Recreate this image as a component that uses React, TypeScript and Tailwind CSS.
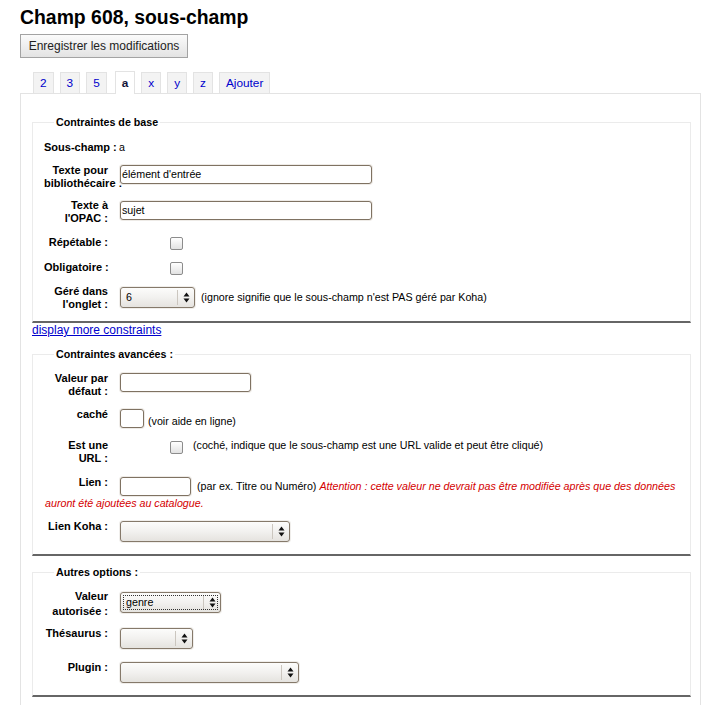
import clsx from "clsx";
import type { ReactNode } from "react";

const tabs = ["2", "3", "5", "a", "x", "y", "z", "Ajouter"];

// Small up/down arrows drawn inside the fake select boxes
function Arrows() {
  return (
    <svg width="7" height="11" viewBox="0 0 7 11">
      <path d="M3.5 0.5 L6.5 4.5 L0.5 4.5 Z" fill="#111" />
      <path d="M0.5 6.5 L6.5 6.5 L3.5 10.5 Z" fill="#111" />
    </svg>
  );
}

function Select({ className, value, focus }: { className: string; value?: string; focus?: boolean }) {
  return (
    <span
      className={clsx(
        "relative flex h-[21px] shrink-0 items-center rounded-[3px] border border-[#85796a] bg-linear-to-b from-[#fcfcfb] via-[#f2f1ef] to-[#e5e3df] shadow-[0_0_0_1px_#f0eeeb]",
        className
      )}
    >
      <span className="flex-1 pl-[5px] leading-[13px]">{value}</span>
      <span className="h-[15px] w-px bg-[#cbc6bf]" />
      <span className="flex w-[16px] justify-center">
        <Arrows />
      </span>
      {focus && <span className="pointer-events-none absolute inset-[2px] border border-dotted border-[#333]" />}
    </span>
  );
}

function TextInput({ className, value }: { className: string; value?: string }) {
  return (
    <span
      className={clsx(
        "flex h-[19px] shrink-0 items-center rounded-[3px] border border-[#7f7262] bg-white pl-[1px] leading-[13px] shadow-[0_0_0_1px_#eeebe7]",
        className
      )}
    >
      {value}
    </span>
  );
}

function Checkbox({ className }: { className?: string }) {
  return (
    <span
      className={clsx(
        "block h-[13px] w-[13px] shrink-0 rounded-[2px] border border-[#8c8c8c] bg-linear-to-b from-white to-[#e2e2e2]",
        className
      )}
    />
  );
}

function Label({ children, className }: { children: ReactNode; className?: string }) {
  return (
    <span className={clsx("w-[64px] shrink-0 text-right text-[11px] font-bold leading-[13px]", className)}>
      {children}
    </span>
  );
}

function Fieldset({ legend, children, className }: { legend: string; children: ReactNode; className?: string }) {
  return (
    <fieldset
      className={clsx(
        "ml-[11px] w-[659px] border border-[#ebebeb] border-b-2 border-b-[#666] pl-[11px]",
        className
      )}
    >
      <legend className="ml-[10px] px-[2px] font-bold leading-[13px]">{legend}</legend>
      {children}
    </fieldset>
  );
}

export default function App() {
  return (
    <div className="min-h-[705px] bg-white pl-[20px] pt-[6px] font-['Liberation_Sans',Arial,Helvetica,sans-serif] text-[10.7px] leading-[13px] text-black">
      {/* Header */}
      <h1 className="text-[19.4px] font-bold leading-[22px]">Champ 608, sous-champ</h1>
      <button className="mt-[6px] h-[24px] w-[168px] border border-[#a3a3a3] bg-linear-to-b from-[#fbfbfb] to-[#e3e3e3] text-[12px] text-[#222]">
        Enregistrer les modifications
      </button>

      {/* Tabs */}
      <div className="mt-[13px] flex items-end gap-[6px] pl-[13px] text-[11.8px]">
        {tabs.map((t) =>
          t === "a" ? (
            <span
              key={t}
              className="relative z-10 -mb-px ml-[2px] h-[23px] border border-b-0 border-[#e3e3e3] bg-white px-[6px] font-bold leading-[22px] text-[#14143a]"
            >
              {t}
            </span>
          ) : (
            <span
              key={t}
              className="h-[21px] border border-b-0 border-[#e3e3e3] bg-[#f3f3f3] px-[6px] leading-[21px] text-[#0000cc]"
            >
              {t}
            </span>
          )
        )}
      </div>

      {/* Panel */}
      <div className="w-[681px] border border-b-0 border-[#e3e3e3] pb-[20px] pt-[22px]">
        <Fieldset legend="Contraintes de base" className="pb-[10px] pt-[12px]">
          <div className="flex items-start gap-[12px]">
            <Label className="whitespace-nowrap">Sous-champ&nbsp;:</Label>
            <span className="-ml-[1px]">a</span>
          </div>
          <div className="mt-[10px] flex items-start gap-[12px]">
            <Label className="whitespace-nowrap">
              Texte pour
              <br />
              <span className="float-left">bibliothécaire&nbsp;:</span>
            </Label>
            <TextInput className="relative mt-[1px] w-[252px]" value="élément d'entrée" />
          </div>
          <div className="mt-[9px] flex items-start gap-[12px]">
            <Label>
              Texte à
              <br />
              l'OPAC&nbsp;:
            </Label>
            <TextInput className="mt-[2px] w-[252px]" value="sujet" />
          </div>
          <div className="mt-[11px] flex items-start gap-[12px]">
            <Label>Répétable&nbsp;:</Label>
            <Checkbox className="ml-[50px] mt-[1px]" />
          </div>
          <div className="mt-[11px] flex items-start gap-[12px]">
            <Label>Obligatoire&nbsp;:</Label>
            <Checkbox className="ml-[50px] mt-[1px]" />
          </div>
          <div className="mt-[10px] flex items-start gap-[12px]">
            <Label>
              Géré dans
              <br />
              l'onglet&nbsp;:
            </Label>
            <Select className="mt-[2px] w-[75px]" value="6" />
            <span className="-ml-[6px] mt-[6px]">(ignore signifie que le sous-champ n'est PAS géré par Koha)</span>
          </div>
        </Fieldset>

        <a className="ml-[11px] block text-[12px] leading-[14px] text-[#0000cc] underline">display more constraints</a>

        <Fieldset legend="Contraintes avancées :" className="mt-[11px] pb-[12px] pt-[11px]">
          <div className="flex items-start gap-[12px]">
            <Label>
              Valeur par
              <br />
              défaut&nbsp;:
            </Label>
            <TextInput className="mt-[1px] w-[131px]" />
          </div>
          <div className="mt-[10px] flex items-start gap-[12px]">
            <Label>caché</Label>
            <TextInput className="mt-[1px] w-[24px]" />
            <span className="-ml-[8px] mt-[7px]">(voir aide en ligne)</span>
          </div>
          <div className="mt-[11px] flex items-start gap-[12px]">
            <Label>
              Est une
              <br />
              URL&nbsp;:
            </Label>
            <Checkbox className="ml-[50px] mt-[2px]" />
            <span className="-ml-[2px]">(coché, indique que le sous-champ est une URL valide et peut être cliqué)</span>
          </div>
          <div className="mt-[11px] flex items-start gap-[12px]">
            <Label>Lien&nbsp;:</Label>
            <TextInput className="mt-[1px] w-[71px]" />
            <span className="-ml-[6px] mt-[4px] whitespace-nowrap">
              (par ex. Titre ou Numéro){" "}
              <em className="text-[#d40000]">
                Attention : cette valeur ne devrait pas être modifiée après que des données
              </em>
            </span>
          </div>
          <div className="mt-[1px] pl-[1px] italic text-[#d40000]">auront été ajoutées au catalogue.</div>
          <div className="mt-[10px] flex items-start gap-[12px]">
            <Label>Lien Koha&nbsp;:</Label>
            <Select className="mt-[1px] w-[170px]" />
          </div>
        </Fieldset>

        <Fieldset legend="Autres options :" className="mt-[10px] pb-[12px] pt-[10px]">
          <div className="flex items-start gap-[12px]">
            <Label className="leading-[15px]">
              Valeur
              <br />
              autorisée&nbsp;:
            </Label>
            <Select className="mt-[3px] w-[101px]" value="genre" focus />
          </div>
          <div className="mt-[8px] flex items-start gap-[12px]">
            <Label>Thésaurus&nbsp;:</Label>
            <Select className="mt-[1px] w-[73px]" />
          </div>
          <div className="mt-[12px] flex items-start gap-[12px]">
            <Label>Plugin&nbsp;:</Label>
            <Select className="mt-[1px] w-[179px]" />
          </div>
        </Fieldset>
      </div>
    </div>
  );
}
